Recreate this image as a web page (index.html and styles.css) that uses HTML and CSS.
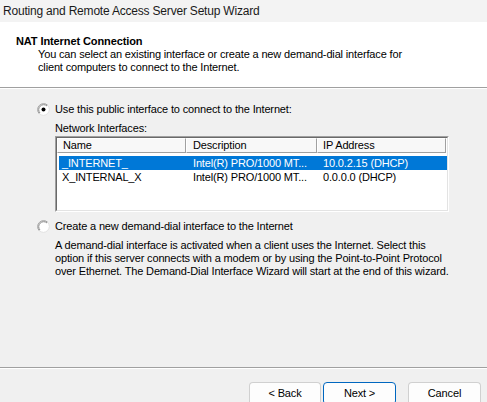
FILE: index.html
```html
<!DOCTYPE html>
<html>
<head>
<meta charset="utf-8">
<title>Routing and Remote Access Server Setup Wizard</title>
<link rel="stylesheet" href="styles.css">
</head>
<body>
<div class="titlebar">Routing and Remote Access Server Setup Wizard</div>
<div class="header">
  <div class="h-title">NAT Internet Connection</div>
  <div class="h-sub">You can select an existing interface or create a new demand-dial interface for<br>client computers to connect to the Internet.</div>
</div>
<div class="main">
  <div class="opt">
    <svg class="radio" width="13" height="13" viewBox="0 0 13 13">
      <circle cx="6.5" cy="6.5" r="5.5" fill="#fff"/>
      <path d="M2.26 10.74 A6 6 0 0 1 10.74 2.26" fill="none" stroke="#a0a0a0" stroke-width="1"/>
      <path d="M10.74 2.26 A6 6 0 0 1 2.26 10.74" fill="none" stroke="#e3e3e3" stroke-width="1"/>
      <path d="M2.97 10.03 A5 5 0 0 1 10.03 2.97" fill="none" stroke="#8a8a8a" stroke-width="1"/>
      <circle cx="6.5" cy="6.5" r="2" fill="#000"/>
    </svg>
    <span>Use this public interface to connect to the Internet:</span>
  </div>
  <div class="indent">
    <div class="ni-label">Network Interfaces:</div>
    <div class="listbox">
      <div class="list-inner">
        <div class="lv-head">
          <div class="hcell c1">Name</div>
          <div class="hcell c2">Description</div>
          <div class="hcell c3">IP Address</div>
        </div>
        <div class="lv-row selected">
          <div class="cell r1">_INTERNET_</div>
          <div class="cell r2">Intel(R) PRO/1000 MT...</div>
          <div class="cell r3">10.0.2.15 (DHCP)</div>
        </div>
        <div class="lv-row">
          <div class="cell r1">X_INTERNAL_X</div>
          <div class="cell r2">Intel(R) PRO/1000 MT...</div>
          <div class="cell r3">0.0.0.0 (DHCP)</div>
        </div>
      </div>
    </div>
  </div>
  <div class="opt opt2">
    <svg class="radio" width="13" height="13" viewBox="0 0 13 13">
      <circle cx="6.5" cy="6.5" r="5.5" fill="#fff"/>
      <path d="M2.26 10.74 A6 6 0 0 1 10.74 2.26" fill="none" stroke="#a0a0a0" stroke-width="1"/>
      <path d="M10.74 2.26 A6 6 0 0 1 2.26 10.74" fill="none" stroke="#e3e3e3" stroke-width="1"/>
      <path d="M2.97 10.03 A5 5 0 0 1 10.03 2.97" fill="none" stroke="#8a8a8a" stroke-width="1"/>
    </svg>
    <span>Create a new demand-dial interface to the Internet</span>
  </div>
  <p class="desc">A demand-dial interface is activated when a client uses the Internet. Select this<br>option if this server connects with a modem or by using the Point-to-Point Protocol<br>over Ethernet. The Demand-Dial Interface Wizard will start at the end of this wizard.</p>
</div>
<div class="footer">
  <button class="btn back">&lt; Back</button>
  <button class="btn next">Next &gt;</button>
  <button class="btn cancel">Cancel</button>
</div>
</body>
</html>
```
FILE: styles.css
```css
html, body {
  margin: 0;
  padding: 0;
  width: 487px;
  height: 402px;
  overflow: hidden;
}
body {
  font-family: "Liberation Sans", Arial, sans-serif;
  font-size: 11px;
  letter-spacing: -0.15px;
  color: #000;
  background: #f0f0f0;
}
.titlebar {
  height: 22px;
  line-height: 22px;
  padding-left: 3px;
  font-size: 12px;
  letter-spacing: -0.2px;
  background: #f3f3f3;
  color: #1a1a1a;
  white-space: nowrap;
}
.header {
  box-sizing: border-box;
  height: 66px;
  background: #fff;
  border-bottom: 1px solid #a0a0a0;
  padding: 12px 0 0 16px;
}
.h-title {
  font-weight: bold;
  line-height: 14px;
  letter-spacing: -0.1px;
}
.h-sub {
  padding-left: 22px;
  line-height: 13px;
  white-space: nowrap;
}
.main {
  box-sizing: border-box;
  height: 279px;
  border-top: 1px solid #fff;
  padding: 14px 0 0 37px;
}
.opt {
  display: flex;
  align-items: center;
  height: 13px;
  line-height: 13px;
  white-space: nowrap;
}
.radio {
  flex: none;
  margin-right: 5px;
}
.indent {
  padding-left: 18px;
}
.ni-label {
  margin-top: 6px;
  line-height: 13px;
}
.listbox {
  margin-top: 1px;
  box-sizing: border-box;
  width: 394px;
  height: 76px;
  border: 1px solid;
  border-color: #a0a0a0 #ffffff #ffffff #a0a0a0;
}
.list-inner {
  box-sizing: border-box;
  height: 100%;
  background: #fff;
  border: 1px solid;
  border-color: #696969 #e3e3e3 #e3e3e3 #696969;
}
.lv-head {
  display: flex;
  height: 15px;
}
.hcell {
  box-sizing: border-box;
  height: 15px;
  line-height: 13px;
  background: #f8f8f8;
  border-top: 1px solid #fff;
  border-left: 1px solid #fff;
  border-right: 1px solid #a0a0a0;
  border-bottom: 1px solid #a0a0a0;
  padding-left: 5px;
  white-space: nowrap;
}
.c1 { width: 129px; }
.c2 { width: 131px; padding-left: 6px; }
.c3 { width: 129px; }
.lv-row {
  display: flex;
  margin-left: 2px;
  height: 14px;
  line-height: 14px;
  white-space: nowrap;
}
.lv-head + .lv-row {
  margin-top: 3px;
}
.lv-row.selected {
  background: #0078d7;
  color: #fff;
}
.cell {
  box-sizing: border-box;
}
.r1 { width: 127px; padding-left: 3px; }
.r2 { width: 131px; padding-left: 7px; }
.r3 { flex: 1; padding-left: 6px; }
.opt2 {
  margin-top: 8px;
}
.desc {
  margin: 6px 0 0 18px;
  line-height: 13px;
  white-space: nowrap;
}
.footer {
  border-top: 1px solid #a0a0a0;
  box-shadow: inset 0 1px 0 #fff;
  display: flex;
  justify-content: flex-end;
  padding: 14px 6px 0 0;
}
.btn {
  box-sizing: border-box;
  width: 73px;
  height: 23px;
  margin: 0;
  padding: 0;
  font-family: "Liberation Sans", Arial, sans-serif;
  font-size: 11px;
  letter-spacing: -0.15px;
  line-height: 21px;
  color: #000;
  background: #fdfdfd;
  border: 1px solid #d0d0d0;
  border-bottom-color: #bdbdbd;
  border-radius: 4px;
}
.back {
  width: 72px;
  margin-right: 2px;
}
.next {
  margin-right: 12px;
  border-color: #0067c0;
}
```
